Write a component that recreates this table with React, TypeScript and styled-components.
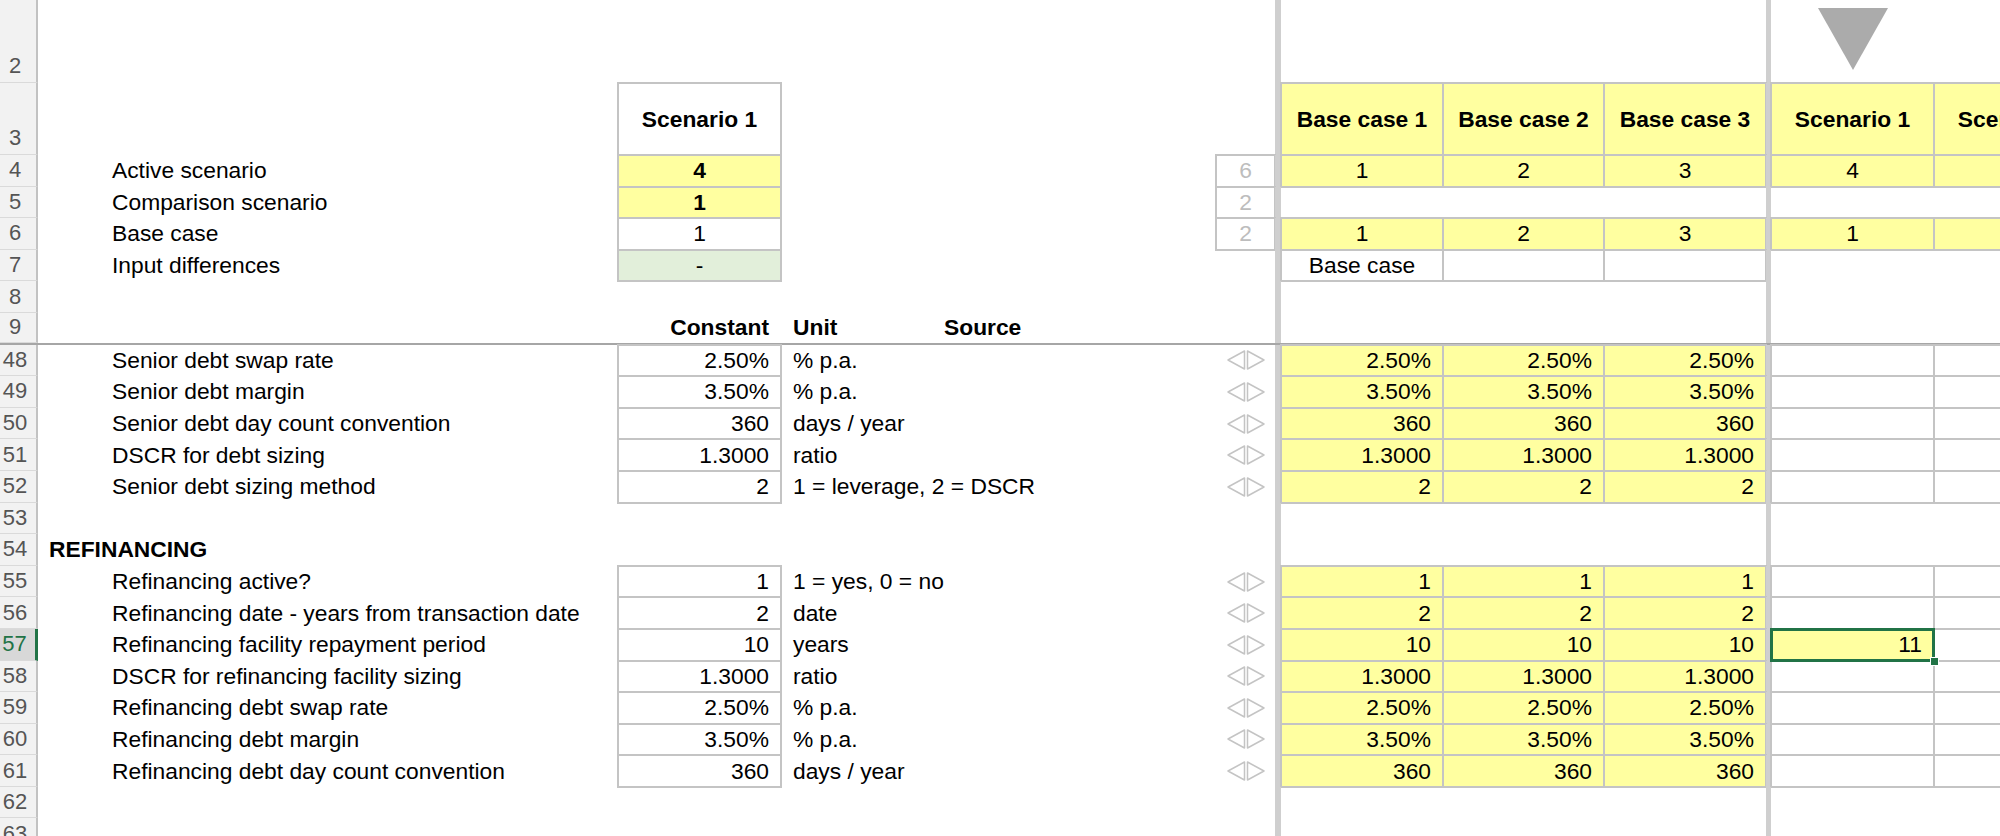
import React from "react";
import styled, { createGlobalStyle } from "styled-components";

const GlobalStyle = createGlobalStyle`
  html, body {
    margin: 0;
    padding: 0;
    background: #ffffff;
    overflow: hidden;
  }
  body {
    font-family: "Liberation Sans", Arial, sans-serif;
  }
`;

// row header | label | constant | unit | source | check box | split | base 1-3 | split | scenario 1-2
const COLS =
  "38px 580px 163px 151px 284px 59px 6px 162px 161px 162px 5px 163px 163px";
const ROW_H = 31.6;

const YELLOW = "#ffffa0";
const GREEN_FILL = "#e2efda";
const BORDER = "#c4c4c4";
const EXCEL_GREEN = "#217346";

type Align = "left" | "center" | "right";

const Sheet = styled.div`
  width: 2000px;
  height: 836px;
  overflow: hidden;
  display: flex;
  flex-direction: column;
  font-size: 22.8px;
  color: #000;
`;

const Row = styled.div<{ $h: number }>`
  display: grid;
  grid-template-columns: ${COLS};
  height: ${(p) => p.$h}px;
  flex: none;
`;

const FreezeLine = styled.div`
  height: 2px;
  flex: none;
  background: #a6a6a6;
`;

const RowHead = styled.div<{ $active?: boolean; $bottom?: boolean }>`
  display: flex;
  justify-content: center;
  align-items: ${(p) => (p.$bottom ? "flex-end" : "center")};
  box-sizing: border-box;
  padding-right: 6px;
  padding-bottom: ${(p) => (p.$bottom ? "3px" : "0")};
  background: ${(p) => (p.$active ? "#d8d8d8" : "#f2f2f2")};
  color: ${(p) => (p.$active ? EXCEL_GREEN : "#555555")};
  border-bottom: 1px solid #dadada;
  border-right: ${(p) =>
    p.$active ? `3px solid ${EXCEL_GREEN}` : "2px solid #c2c2c2"};
  font-size: 22px;
`;

const Cell = styled.div<{
  $align?: Align;
  $fill?: string;
  $boxed?: boolean;
  $bold?: boolean;
  $pad?: number;
  $muted?: boolean;
}>`
  display: flex;
  align-items: center;
  justify-content: ${(p) =>
    p.$align === "right"
      ? "flex-end"
      : p.$align === "center"
      ? "center"
      : "flex-start"};
  min-width: 0;
  padding: 0 12px 0 ${(p) => p.$pad ?? 12}px;
  background: ${(p) => p.$fill ?? "transparent"};
  outline: ${(p) => (p.$boxed ? `2px solid ${BORDER}` : "none")};
  outline-offset: -1px;
  font-weight: ${(p) => (p.$bold ? 700 : 400)};
  color: ${(p) => (p.$muted ? "#bdbdbd" : "#000")};
  white-space: nowrap;
`;

const ActiveCell = styled(Cell)`
  position: relative;
  z-index: 2;
  outline: 3px solid ${EXCEL_GREEN};
  outline-offset: -2px;
`;

const FillHandle = styled.span`
  position: absolute;
  right: -5px;
  bottom: -5px;
  width: 7px;
  height: 7px;
  background: ${EXCEL_GREEN};
  border: 1px solid #ffffff;
`;

const Split = styled.div`
  background: #cfcfcf;
`;

const IconCell = styled.div`
  display: flex;
  align-items: center;
  justify-content: center;
`;

const MarkerCell = styled.div`
  display: flex;
  justify-content: center;
  padding-top: 8px;
`;

const Arrows = () => (
  <svg width="40" height="22" viewBox="0 0 40 22">
    <g fill="none" stroke="#c4c4c4" strokeWidth="1.5" strokeLinejoin="round">
      <path d="M18.5 2 L2 11 L18.5 20 Z" />
      <path d="M21.5 2 L38 11 L21.5 20 Z" />
    </g>
  </svg>
);

const Marker = () => (
  <svg width="70" height="62" viewBox="0 0 70 62">
    <polygon points="0,0 70,0 35,62" fill="#ababab" />
  </svg>
);

type Param = {
  n: number;
  label: string;
  value: string;
  unit: string;
  override?: string;
};

const senior: Param[] = [
  { n: 48, label: "Senior debt swap rate", value: "2.50%", unit: "% p.a." },
  { n: 49, label: "Senior debt margin", value: "3.50%", unit: "% p.a." },
  { n: 50, label: "Senior debt day count convention", value: "360", unit: "days / year" },
  { n: 51, label: "DSCR for debt sizing", value: "1.3000", unit: "ratio" },
  { n: 52, label: "Senior debt sizing method", value: "2", unit: "1 = leverage, 2 = DSCR" },
];

const refinancing: Param[] = [
  { n: 55, label: "Refinancing active?", value: "1", unit: "1 = yes, 0 = no" },
  { n: 56, label: "Refinancing date - years from transaction date", value: "2", unit: "date" },
  { n: 57, label: "Refinancing facility repayment period", value: "10", unit: "years", override: "11" },
  { n: 58, label: "DSCR for refinancing facility sizing", value: "1.3000", unit: "ratio" },
  { n: 59, label: "Refinancing debt swap rate", value: "2.50%", unit: "% p.a." },
  { n: 60, label: "Refinancing debt margin", value: "3.50%", unit: "% p.a." },
  { n: 61, label: "Refinancing debt day count convention", value: "360", unit: "days / year" },
];

function ParamRow({ p }: { p: Param }) {
  return (
    <Row $h={ROW_H}>
      <RowHead $active={!!p.override}>{p.n}</RowHead>
      <Cell $pad={74}>{p.label}</Cell>
      <Cell $align="right" $boxed>
        {p.value}
      </Cell>
      <Cell>{p.unit}</Cell>
      <Cell />
      <IconCell>
        <Arrows />
      </IconCell>
      <Split />
      {[0, 1, 2].map((i) => (
        <Cell key={i} $align="right" $boxed $fill={YELLOW}>
          {p.value}
        </Cell>
      ))}
      <Split />
      {p.override ? (
        <ActiveCell $align="right" $fill={YELLOW}>
          {p.override}
          <FillHandle />
        </ActiveCell>
      ) : (
        <Cell $boxed />
      )}
      <Cell $boxed />
    </Row>
  );
}

function BlankRow({ n, h = ROW_H }: { n: number; h?: number }) {
  return (
    <Row $h={h}>
      <RowHead>{n}</RowHead>
      <Cell />
      <Cell />
      <Cell />
      <Cell />
      <Cell />
      <Split />
      <Cell />
      <Cell />
      <Cell />
      <Split />
      <Cell />
      <Cell />
    </Row>
  );
}

export default function App() {
  return (
    <>
      <GlobalStyle />
      <Sheet>
        <Row $h={83}>
          <RowHead $bottom>2</RowHead>
          <Cell />
          <Cell />
          <Cell />
          <Cell />
          <Cell />
          <Split />
          <Cell />
          <Cell />
          <Cell />
          <Split />
          <MarkerCell>
            <Marker />
          </MarkerCell>
          <Cell />
        </Row>

        <Row $h={72}>
          <RowHead $bottom>3</RowHead>
          <Cell />
          <Cell $align="center" $boxed $bold $fill="#ffffff">
            Scenario 1
          </Cell>
          <Cell />
          <Cell />
          <Cell />
          <Split />
          <Cell $align="center" $boxed $bold $fill={YELLOW}>Base case 1</Cell>
          <Cell $align="center" $boxed $bold $fill={YELLOW}>Base case 2</Cell>
          <Cell $align="center" $boxed $bold $fill={YELLOW}>Base case 3</Cell>
          <Split />
          <Cell $align="center" $boxed $bold $fill={YELLOW}>Scenario 1</Cell>
          <Cell $align="center" $boxed $bold $fill={YELLOW}>Scenario 2</Cell>
        </Row>

        <Row $h={ROW_H}>
          <RowHead>4</RowHead>
          <Cell $pad={74}>Active scenario</Cell>
          <Cell $align="center" $boxed $bold $fill={YELLOW}>4</Cell>
          <Cell />
          <Cell />
          <Cell $align="center" $boxed $muted>6</Cell>
          <Split />
          <Cell $align="center" $boxed $fill={YELLOW}>1</Cell>
          <Cell $align="center" $boxed $fill={YELLOW}>2</Cell>
          <Cell $align="center" $boxed $fill={YELLOW}>3</Cell>
          <Split />
          <Cell $align="center" $boxed $fill={YELLOW}>4</Cell>
          <Cell $boxed $fill={YELLOW} />
        </Row>

        <Row $h={ROW_H}>
          <RowHead>5</RowHead>
          <Cell $pad={74}>Comparison scenario</Cell>
          <Cell $align="center" $boxed $bold $fill={YELLOW}>1</Cell>
          <Cell />
          <Cell />
          <Cell $align="center" $boxed $muted>2</Cell>
          <Split />
          <Cell />
          <Cell />
          <Cell />
          <Split />
          <Cell />
          <Cell />
        </Row>

        <Row $h={ROW_H}>
          <RowHead>6</RowHead>
          <Cell $pad={74}>Base case</Cell>
          <Cell $align="center" $boxed $fill="#ffffff">1</Cell>
          <Cell />
          <Cell />
          <Cell $align="center" $boxed $muted>2</Cell>
          <Split />
          <Cell $align="center" $boxed $fill={YELLOW}>1</Cell>
          <Cell $align="center" $boxed $fill={YELLOW}>2</Cell>
          <Cell $align="center" $boxed $fill={YELLOW}>3</Cell>
          <Split />
          <Cell $align="center" $boxed $fill={YELLOW}>1</Cell>
          <Cell $boxed $fill={YELLOW} />
        </Row>

        <Row $h={ROW_H}>
          <RowHead>7</RowHead>
          <Cell $pad={74}>Input differences</Cell>
          <Cell $align="center" $boxed $fill={GREEN_FILL}>-</Cell>
          <Cell />
          <Cell />
          <Cell />
          <Split />
          <Cell $align="center" $boxed>Base case</Cell>
          <Cell $boxed />
          <Cell $boxed />
          <Split />
          <Cell />
          <Cell />
        </Row>

        <BlankRow n={8} />

        <Row $h={ROW_H - 2}>
          <RowHead>9</RowHead>
          <Cell />
          <Cell $align="right" $bold>Constant</Cell>
          <Cell $bold>Unit</Cell>
          <Cell $bold>Source</Cell>
          <Cell />
          <Split />
          <Cell />
          <Cell />
          <Cell />
          <Split />
          <Cell />
          <Cell />
        </Row>
        <FreezeLine />

        {senior.map((p) => (
          <ParamRow key={p.n} p={p} />
        ))}

        <BlankRow n={53} />

        <Row $h={ROW_H}>
          <RowHead>54</RowHead>
          <Cell $pad={11} $bold>REFINANCING</Cell>
          <Cell />
          <Cell />
          <Cell />
          <Cell />
          <Split />
          <Cell />
          <Cell />
          <Cell />
          <Split />
          <Cell />
          <Cell />
        </Row>

        {refinancing.map((p) => (
          <ParamRow key={p.n} p={p} />
        ))}

        <BlankRow n={62} />
        <BlankRow n={63} />
      </Sheet>
    </>
  );
}
